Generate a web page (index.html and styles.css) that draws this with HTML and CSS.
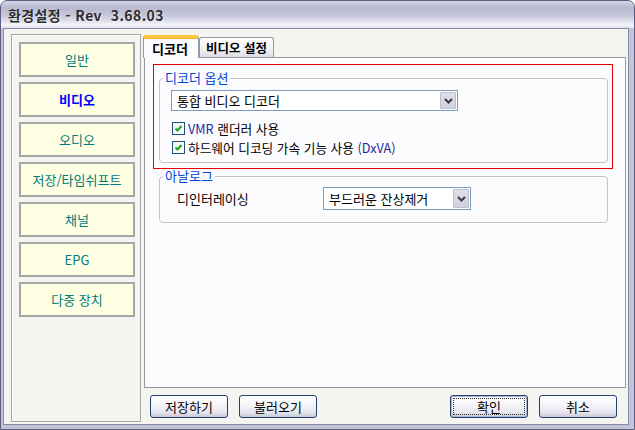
FILE: index.html
```html
<!DOCTYPE html>
<html lang="ko">
<head>
    <meta charset="UTF-8">
    <meta name="viewport" content="width=device-width, initial-scale=1.0">
    <title>환경설정</title>
    <link rel="stylesheet" href="styles.css">
</head>
<body>
    <div class="window">
        <div class="titlebar">
            <span class="title">환경설정 - Rev&nbsp; 3.68.03</span>
        </div>
        <div class="client">
            <div class="side">
                <div class="side-btn">일반</div>
                <div class="side-btn active">비디오</div>
                <div class="side-btn">오디오</div>
                <div class="side-btn">저장/타임쉬프트</div>
                <div class="side-btn">채널</div>
                <div class="side-btn">EPG</div>
                <div class="side-btn">다중 장치</div>
            </div>
            <div class="main">
                <div class="tabs">
                    <div class="tab selected">디코더</div>
                    <div class="tab">비디오 설정</div>
                </div>
                <div class="tab-panel">
                    <div class="highlight">
                        <fieldset class="group">
                            <legend>디코더 옵션</legend>
                            <div class="combo decoder">
                                <span class="combo-text">통합 비디오 디코더</span>
                                <span class="combo-btn">
                                    <svg width="9" height="6" viewBox="0 0 9 6"><path d="M1 1 L4.5 4.5 L8 1" fill="none" stroke="#3c3c3c" stroke-width="2"/></svg>
                                </span>
                            </div>
                            <label class="check">
                                <span class="box"><svg width="11" height="11" viewBox="0 0 11 11"><path d="M2.5 5.5 L4.5 7.5 L8.5 3" fill="none" stroke="#21a121" stroke-width="2"/></svg></span>
                                <span><span class="accent">VMR</span> 랜더러 사용</span>
                            </label>
                            <label class="check">
                                <span class="box"><svg width="11" height="11" viewBox="0 0 11 11"><path d="M2.5 5.5 L4.5 7.5 L8.5 3" fill="none" stroke="#21a121" stroke-width="2"/></svg></span>
                                <span>하드웨어 디코딩 가속 기능 사용 <span class="accent">(DxVA)</span></span>
                            </label>
                        </fieldset>
                    </div>
                    <fieldset class="group analog">
                        <legend>아날로그</legend>
                        <div class="field-row">
                            <span class="field-label">디인터레이싱</span>
                            <div class="combo deint">
                                <span class="combo-text">부드러운 잔상제거</span>
                                <span class="combo-btn">
                                    <svg width="9" height="6" viewBox="0 0 9 6"><path d="M1 1 L4.5 4.5 L8 1" fill="none" stroke="#3c3c3c" stroke-width="2"/></svg>
                                </span>
                            </div>
                        </div>
                    </fieldset>
                </div>
                <div class="actions">
                    <div class="action-group">
                        <button class="btn">저장하기</button>
                        <button class="btn">불러오기</button>
                    </div>
                    <div class="action-group">
                        <button class="btn default"><span class="focus">확인</span></button>
                        <button class="btn">취소</button>
                    </div>
                </div>
            </div>
        </div>
    </div>
</body>
</html>
```

FILE: styles.css
```css
body {
    margin: 0;
    background: #ffffff;
    font-family: "Noto Sans CJK KR", "Noto Sans", sans-serif;
    font-size: 13px;
    color: #000;
}
.window {
    width: 635px;
    height: 430px;
    box-sizing: border-box;
    border: 1px solid #5d5d7f;
    border-radius: 7px 7px 0 0;
    background: #c4c4d8;
    display: flex;
    flex-direction: column;
    overflow: hidden;
}
.titlebar {
    height: 27px;
    flex: none;
    display: flex;
    align-items: center;
    padding-left: 7px;
    background: linear-gradient(to bottom, #d2d2e2 0%, #b9b9d0 25%, #c3c3d8 50%, #dcdcea 72%, #f4f4f9 88%, #e2e2ec 100%);
}
.title {
    font-size: 14px;
    font-weight: bold;
    color: #2e2e2e;
    text-shadow: 1px 1px 0 rgba(255, 255, 255, 0.6);
    letter-spacing: 0.4px;
}
.client {
    flex: 1;
    margin: 0 5px 4px 2px;
    border: 1px solid #8888aa;
    background: #f5f4f0;
    display: flex;
    padding: 5px 2px 2px 7px;
    gap: 3px;
}
.side {
    width: 130px;
    box-sizing: border-box;
    border: 1px solid #a5a5a5;
    box-shadow: inset 1px 1px 0 #ffffff;
    padding: 7px 0 0 7px;
    display: flex;
    flex-direction: column;
    gap: 5px;
}
.side-btn {
    width: 116px;
    height: 35px;
    box-sizing: border-box;
    border: 2px solid #a6a6a6;
    background: #fefee2;
    color: #007b7b;
    display: flex;
    align-items: center;
    justify-content: center;
}
.side-btn.active {
    color: #0000ff;
    font-weight: bold;
}
.main {
    width: 482px;
    margin-top: 1px;
    display: flex;
    flex-direction: column;
}
.tabs {
    height: 22px;
    display: flex;
    align-items: flex-end;
}
.tab {
    height: 20px;
    box-sizing: border-box;
    border: 1px solid #919b9c;
    border-bottom: none;
    border-radius: 3px 3px 0 0;
    background: linear-gradient(to bottom, #ffffff 0%, #f1f1f5 60%, #dcdce6 100%);
    font-weight: bold;
    font-size: 12.5px;
    padding: 0 6px;
    display: flex;
    align-items: center;
}
.tab.selected {
    height: 23px;
    margin-left: -1px;
    margin-bottom: -1px;
    position: relative;
    z-index: 1;
    width: 56px;
    padding-left: 8px;
    background: #fcfcfe;
    border-top: 3px solid #ffc83c;
    box-shadow: inset 0 1px 0 #f7b33a;
    font-size: 13px;
}
.tab-panel {
    flex: 1;
    border: 1px solid #919b9c;
    background: #fcfcfe;
    padding-top: 6px;
}
.highlight {
    width: 460px;
    box-sizing: border-box;
    margin-left: 8px;
    border: 1px solid #e00000;
    padding: 6px 4px 5px 5px;
}
.group {
    width: 449px;
    box-sizing: border-box;
    margin: 0;
    border: 1px solid #c3c3c8;
    border-radius: 4px;
    padding: 5px 10px 5px 11px;
}
.group legend {
    color: #0046d5;
    font-size: 13px;
    line-height: 14px;
    padding: 0 2px;
    margin-left: -8px;
}
.analog {
    margin-left: 14px;
    padding-top: 4px;
    padding-bottom: 12px;
}
.combo {
    box-sizing: border-box;
    border: 1px solid #7f9db9;
    background: #fff;
    display: flex;
    align-items: center;
    padding: 1px;
}
.combo.decoder {
    width: 287px;
    height: 21px;
    margin-bottom: 8px;
}
.combo.deint {
    width: 148px;
    height: 23px;
}
.combo-text {
    flex: 1;
    padding-left: 4px;
}
.combo-btn {
    width: 16px;
    align-self: stretch;
    box-sizing: border-box;
    border: 1px solid #b9c0d6;
    border-radius: 1px;
    background: linear-gradient(to bottom, #e0e0ea 0%, #d0d0de 100%);
    display: flex;
    align-items: center;
    justify-content: center;
}
.check {
    height: 19px;
    display: flex;
    align-items: center;
    gap: 3px;
    font-size: 12.7px;
}
.box {
    width: 13px;
    height: 13px;
    margin-left: 1px;
    box-sizing: border-box;
    border: 1px solid #1c5180;
    background: linear-gradient(135deg, #f2f2ee 0%, #ffffff 100%);
    display: flex;
    align-items: center;
    justify-content: center;
}
.accent {
    color: #1c2a9c;
}
.field-row {
    height: 23px;
    display: flex;
    align-items: center;
}
.field-label {
    width: 152px;
    padding-left: 6px;
    box-sizing: border-box;
}
.actions {
    height: 23px;
    margin: 7px 9px 4px 6px;
    display: flex;
    justify-content: space-between;
}
.action-group {
    display: flex;
    gap: 11px;
}
.btn {
    width: 78px;
    height: 23px;
    box-sizing: border-box;
    border: 1px solid #1f3f6c;
    border-radius: 3px;
    background: linear-gradient(to bottom, #ffffff 0%, #f4f4f8 45%, #e4e4ec 80%, #c8c8d8 100%);
    font-family: "Noto Sans CJK KR", "Noto Sans", sans-serif;
    font-size: 13px;
    color: #000;
    padding: 0;
    display: flex;
    align-items: center;
    justify-content: center;
}
.btn.default {
    box-shadow: inset 0 0 0 1px #a8b8d8;
}
.focus {
    width: 72px;
    height: 17px;
    box-sizing: border-box;
    border: 1px dotted #333;
    display: flex;
    align-items: center;
    justify-content: center;
}
```
